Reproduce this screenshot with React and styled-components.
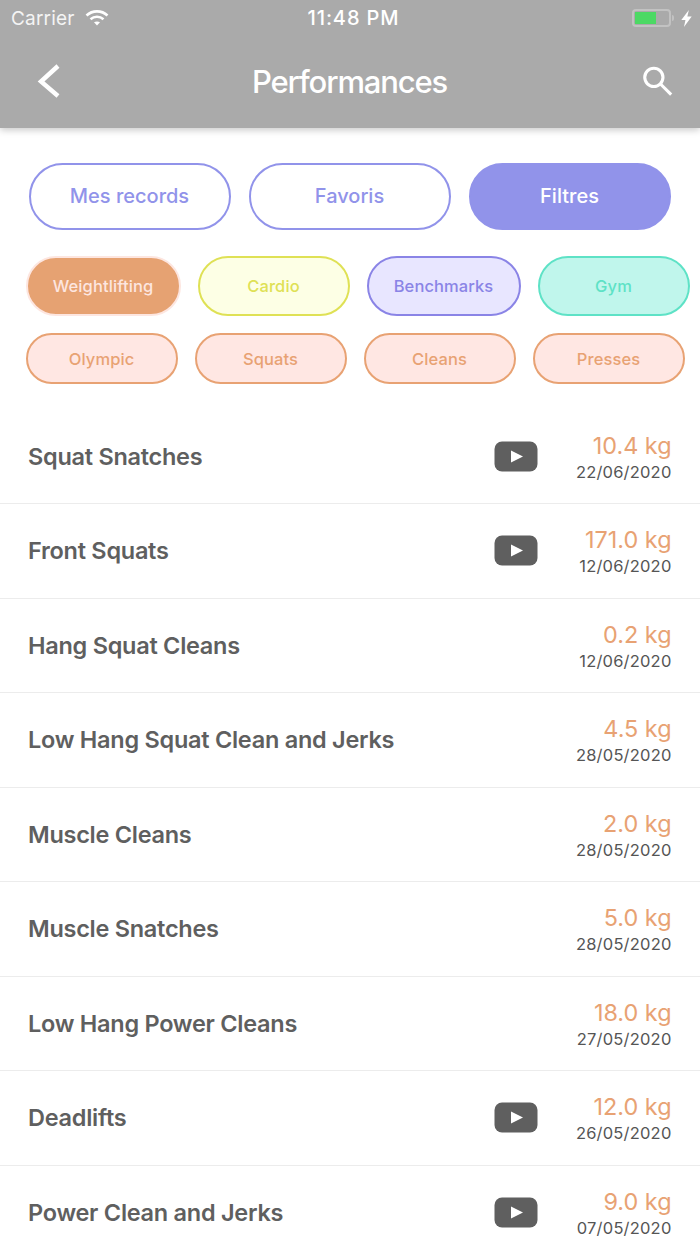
import React from 'react';
import styled, { createGlobalStyle } from 'styled-components';

const Global = createGlobalStyle`
  html, body { margin: 0; padding: 0; background: #fff; }
  body { font-family: Inter, "Liberation Sans", sans-serif; -webkit-font-smoothing: antialiased; }
`;

const Page = styled.div`
  width: 700px;
  height: 1244px;
  overflow: hidden;
  background: #fff;
  display: flex;
  flex-direction: column;
`;
const Header = styled.header`
  height: 128px;
  flex: none;
  background: #aaaaaa;
  box-shadow: 0 2px 7px rgba(0, 0, 0, 0.22);
  color: #fff;
  display: flex;
  flex-direction: column;
`;
const StatusBar = styled.div`
  height: 36px;
  flex: none;
  display: grid;
  grid-template-columns: 1fr auto 1fr;
  align-items: center;
  padding: 0 8px 0 11px;
  font-size: 19px;
  letter-spacing: 0.2px;
`;
const StatusLeft = styled.div`
  display: flex;
  align-items: center;
  gap: 10px;
  color: #f4f4f4;
`;
const StatusRight = styled.div`
  display: flex;
  align-items: center;
  justify-content: flex-end;
  gap: 7px;
`;
const Clock = styled.div`
  font-size: 20px;
  font-weight: 500;
  letter-spacing: 0.9px;
  margin-left: 4px;
`;
const Battery = styled.div`
  width: 39px;
  height: 18px;
  box-sizing: border-box;
  border: 2px solid #c2c2c2;
  border-radius: 4px;
  padding: 1px;
  display: flex;
  margin-right: 3px;
  position: relative;
  &::after {
    content: '';
    position: absolute;
    right: -5px;
    top: 4px;
    width: 2px;
    height: 6px;
    background: #c2c2c2;
    border-radius: 0 2px 2px 0;
  }
`;
const BatteryFill = styled.div`
  width: 21px;
  background: #4cd964;
`;
const NavBar = styled.div`
  flex: 1;
  display: grid;
  grid-template-columns: 1fr auto 1fr;
  align-items: center;
  padding: 0 27px 0 36px;
  margin-top: -2px;
`;
const Title = styled.h1`
  margin: 0 10px 0 0;
  font-size: 31px;
  font-weight: 500;
  letter-spacing: -1.15px;
  color: #fff;
`;
const IconBox = styled.div`
  display: flex;
  justify-content: ${p => p.$justify};
`;
const Tabs = styled.div`
  display: flex;
  gap: 18px;
  padding: 35px 0 0 29px;
`;
const Tab = styled.button`
  width: 202px;
  height: 67px;
  box-sizing: border-box;
  border-radius: 34px;
  border: 2px solid #9193ea;
  background: ${p => (p.$active ? '#9193ea' : '#fff')};
  color: ${p => (p.$active ? '#fff' : '#9193ea')};
  font: 500 20px Inter, "Liberation Sans", sans-serif;
  padding: 0 1px 2px 0;
`;
const ChipRow = styled.div`
  display: flex;
  padding-left: 26px;
  margin-top: ${p => p.$top}px;
  gap: 17px;
`;
const Chip = styled.div`
  width: ${p => p.$w}px;
  height: ${p => p.$h}px;
  box-sizing: border-box;
  border-radius: 30px;
  border: 2px solid ${p => p.$border};
  background: ${p => p.$bg};
  color: ${p => p.$color};
  font-size: 16.5px;
  font-weight: 450;
  letter-spacing: 0.1px;
  display: flex;
  align-items: center;
  justify-content: center;
  padding-right: 1px;
`;
const List = styled.div`
  margin-top: 25.5px;
  display: flex;
  flex-direction: column;
`;
const Row = styled.div`
  height: 94.5px;
  flex: none;
  box-sizing: border-box;
  padding: 0 28.5px 0 28px;
  display: flex;
  align-items: center;
  border-bottom: 1px solid #ececec;
`;
const Name = styled.div`
  flex: 1;
  font-size: 23.5px;
  font-weight: 600;
  letter-spacing: -0.27px;
  color: #5f5f5f;
`;
const Play = styled.div`
  display: flex;
  margin-right: 29px;
`;
const Stat = styled.div`
  width: 105px;
  flex: none;
  display: flex;
  flex-direction: column;
  align-items: flex-end;
  gap: 3px;
  margin-top: 1px;
`;
const Weight = styled.div`
  font-size: 23.4px;
  color: #e8a273;
  line-height: 27px;
`;
const DateText = styled.div`
  font-size: 16.5px;
  color: #555;
  letter-spacing: 0.2px;
  line-height: 20px;
`;

const rows = [
  ['Squat Snatches', '10.4 kg', '22/06/2020', true],
  ['Front Squats', '171.0 kg', '12/06/2020', true],
  ['Hang Squat Cleans', '0.2 kg', '12/06/2020', false],
  ['Low Hang Squat Clean and Jerks', '4.5 kg', '28/05/2020', false],
  ['Muscle Cleans', '2.0 kg', '28/05/2020', false],
  ['Muscle Snatches', '5.0 kg', '28/05/2020', false],
  ['Low Hang Power Cleans', '18.0 kg', '27/05/2020', false],
  ['Deadlifts', '12.0 kg', '26/05/2020', true],
  ['Power Clean and Jerks', '9.0 kg', '07/05/2020', true],
];

const orange = { $border: '#e8a273', $bg: '#ffe7e3', $color: '#e8a273' };

const Wifi = () => (
  <svg width="24" height="18" viewBox="0 0 24 18" fill="none" stroke="#fff" strokeWidth="2.6">
    <path d="M1.5 6.5C7.5 1 16.5 1 22.5 6.5" />
    <path d="M5.5 10.2c3.8-3.2 9.2-3.2 13 0" />
    <path d="M12 16.5l-3-3.2c1.8-1.2 4.2-1.2 6 0z" fill="#fff" stroke="none" />
  </svg>
);
const Bolt = () => (
  <svg width="11" height="17" viewBox="0 0 11 18">
    <path d="M8 0L0 10.6H4.4L2.8 18L11 6.8H6.4z" fill="#fff" />
  </svg>
);
const Back = () => (
  <svg width="26" height="36" viewBox="0 0 26 36" fill="none" stroke="#fff" strokeWidth="4.4">
    <path d="M22 3L5 18.5L22 33" />
  </svg>
);
const Search = () => (
  <svg width="31" height="32" viewBox="0 0 34 34" fill="none" stroke="#fff" strokeWidth="3.4">
    <circle cx="13" cy="13" r="10" />
    <path d="M20 20L32 32" />
  </svg>
);
const YouTube = () => (
  <svg width="44" height="31" viewBox="0 0 44 31">
    <rect x="0.5" y="0.5" width="43" height="30" rx="7.5" fill="#5f5f5f" />
    <path d="M17 9.5L29 15.5L17 21.5z" fill="#fff" />
  </svg>
);

export default function App() {
  return (
    <Page>
      <Global />
      <Header>
        <StatusBar>
          <StatusLeft>Carrier <Wifi /></StatusLeft>
          <Clock>11:48 PM</Clock>
          <StatusRight>
            <Battery><BatteryFill /></Battery>
            <Bolt />
          </StatusRight>
        </StatusBar>
        <NavBar>
          <IconBox $justify="flex-start"><Back /></IconBox>
          <Title>Performances</Title>
          <IconBox $justify="flex-end"><Search /></IconBox>
        </NavBar>
      </Header>
      <Tabs>
        <Tab>Mes records</Tab>
        <Tab>Favoris</Tab>
        <Tab $active>Filtres</Tab>
      </Tabs>
      <ChipRow $top={26}>
        <Chip $w={155} $h={60} $border="#fde6e0" $bg="#e6a272" $color="#fde6e0">Weightlifting</Chip>
        <Chip $w={152} $h={60} $border="#dfe155" $bg="#fdffe5" $color="#dfe155">Cardio</Chip>
        <Chip $w={154} $h={60} $border="#8a84e6" $bg="#e8e6ff" $color="#8a84e6">Benchmarks</Chip>
        <Chip $w={152} $h={60} $border="#5ee2c6" $bg="#c0f6ec" $color="#5ee2c6">Gym</Chip>
      </ChipRow>
      <ChipRow $top={17}>
        <Chip $w={152} $h={51} {...orange}>Olympic</Chip>
        <Chip $w={152} $h={51} {...orange}>Squats</Chip>
        <Chip $w={152} $h={51} {...orange}>Cleans</Chip>
        <Chip $w={152} $h={51} {...orange}>Presses</Chip>
      </ChipRow>
      <List>
        {rows.map(([name, weight, date, video]) => (
          <Row key={name}>
            <Name>{name}</Name>
            {video && <Play><YouTube /></Play>}
            <Stat>
              <Weight>{weight}</Weight>
              <DateText>{date}</DateText>
            </Stat>
          </Row>
        ))}
      </List>
    </Page>
  );
}
